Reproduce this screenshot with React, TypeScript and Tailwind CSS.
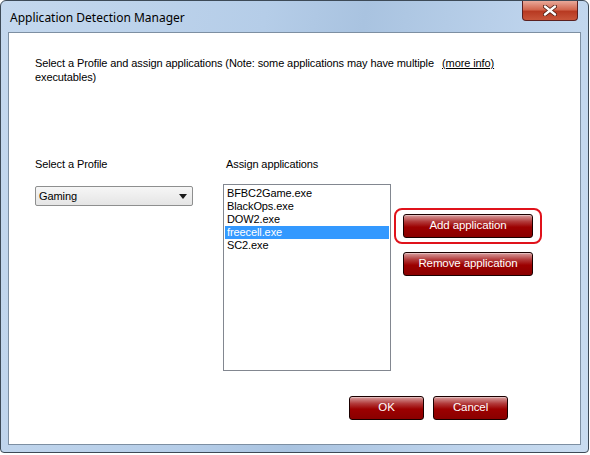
import React from "react";

const font = { fontFamily: "'Liberation Sans', Arial, sans-serif" };

function RedButton({ label, className = "" }: { label: string; className?: string }) {
  return (
    <button
      className={`h-[24px] rounded-[3px] border border-[#1a0000] bg-[linear-gradient(to_bottom,#d9a0a0_0%,#b23a3a_30%,#9c0000_55%,#8a0000_100%)] text-[11.5px] text-white shadow-[inset_0_1px_0_rgba(255,255,255,0.35)] ${className}`}
      style={font}
    >
      {label}
    </button>
  );
}

export default function App() {
  const apps = ["BFBC2Game.exe", "BlackOps.exe", "DOW2.exe", "freecell.exe", "SC2.exe"];
  const selected = "freecell.exe";

  return (
    <div className="h-[455px] w-[590px] overflow-hidden bg-white">
      <div className="flex h-[453px] w-[589px] flex-col rounded-t-[6px] rounded-b-[4px] border border-[#3d4a57] bg-[linear-gradient(100deg,#c4d8ee_0%,#b5cde8_40%,#a9c3e0_55%,#bdd3ec_80%,#c9dcf0_100%)]">
        {/* title bar */}
        <div className="flex h-[31px] items-start justify-between">
          <span
            className="pl-[9px] pt-[8px] text-[12px] text-black"
            style={{ fontFamily: "'Noto Sans', 'Open Sans', sans-serif" }}
          >
            Application Detection Manager
          </span>
          <div className="mr-[10px] flex h-[20px] w-[56px] items-center justify-center rounded-b-[4px] border border-t-0 border-[#5a2020] bg-[linear-gradient(to_bottom,#e9a99a_0%,#d2674f_45%,#b83a22_55%,#c8553a_100%)]">
            <svg width="14" height="11" viewBox="0 0 14 11">
              <path
                d="M2 1.5 L12 9.5 M12 1.5 L2 9.5"
                stroke="#4a1a10"
                strokeWidth="4"
                strokeLinecap="round"
              />
              <path
                d="M2 1.5 L12 9.5 M12 1.5 L2 9.5"
                stroke="#ffffff"
                strokeWidth="2.4"
                strokeLinecap="round"
              />
            </svg>
          </div>
        </div>

        {/* client area */}
        <div
          className="mx-[7px] flex h-[413px] flex-col border border-[#7d8fa2] bg-white text-[11px] tracking-[-0.1px] text-black"
          style={font}
        >
          <div className="flex pl-[26px] pr-[70px] pt-[23px] leading-[14px]">
            <p className="w-[403px]">
              Select a Profile and assign applications (Note: some applications may have multiple executables)
            </p>
            <a className="ml-[4px] whitespace-nowrap underline">(more info)</a>
          </div>

          <div className="mt-[73px] flex">
            {/* profile column */}
            <div className="ml-[26px] flex w-[158px] flex-col">
              <span className="leading-[14px]">Select a Profile</span>
              <div className="mt-[15px] flex h-[20px] items-center justify-between rounded-[2px] border border-[#8e8f8f] bg-[linear-gradient(to_bottom,#f6f6f6,#e5e5e5)] pl-[3px] pr-[5px]">
                <span>Gaming</span>
                <svg width="8" height="5" viewBox="0 0 8 5">
                  <path d="M0 0 H8 L4 5 Z" fill="#1a1a1a" />
                </svg>
              </div>
            </div>

            {/* applications column */}
            <div className="ml-[30px] flex w-[168px] flex-col">
              <span className="pl-[3px] leading-[14px]">Assign applications</span>
              <div className="mt-[13px] h-[187px] border border-[#828790] bg-white px-[1px] pt-[2px]">
                {apps.map((a) => (
                  <div
                    key={a}
                    className={`h-[13px] pl-[2px] leading-[13px] ${
                      a === selected ? "bg-[#3399ff] text-white" : ""
                    }`}
                  >
                    {a}
                  </div>
                ))}
              </div>
            </div>

            {/* action buttons */}
            <div className="ml-[3px] mt-[51px] flex flex-col">
              <div className="rounded-[8px] border-2 border-[#e0121b] px-[7px] py-[4px]">
                <RedButton label="Add application" className="w-[130px]" />
              </div>
              <RedButton label="Remove application" className="ml-[9px] mt-[8px] w-[130px]" />
            </div>
          </div>

          <div className="mt-[25px] flex justify-end gap-[9px] pr-[72px]">
            <RedButton label="OK" className="w-[75px]" />
            <RedButton label="Cancel" className="w-[75px]" />
          </div>
        </div>
      </div>
    </div>
  );
}
